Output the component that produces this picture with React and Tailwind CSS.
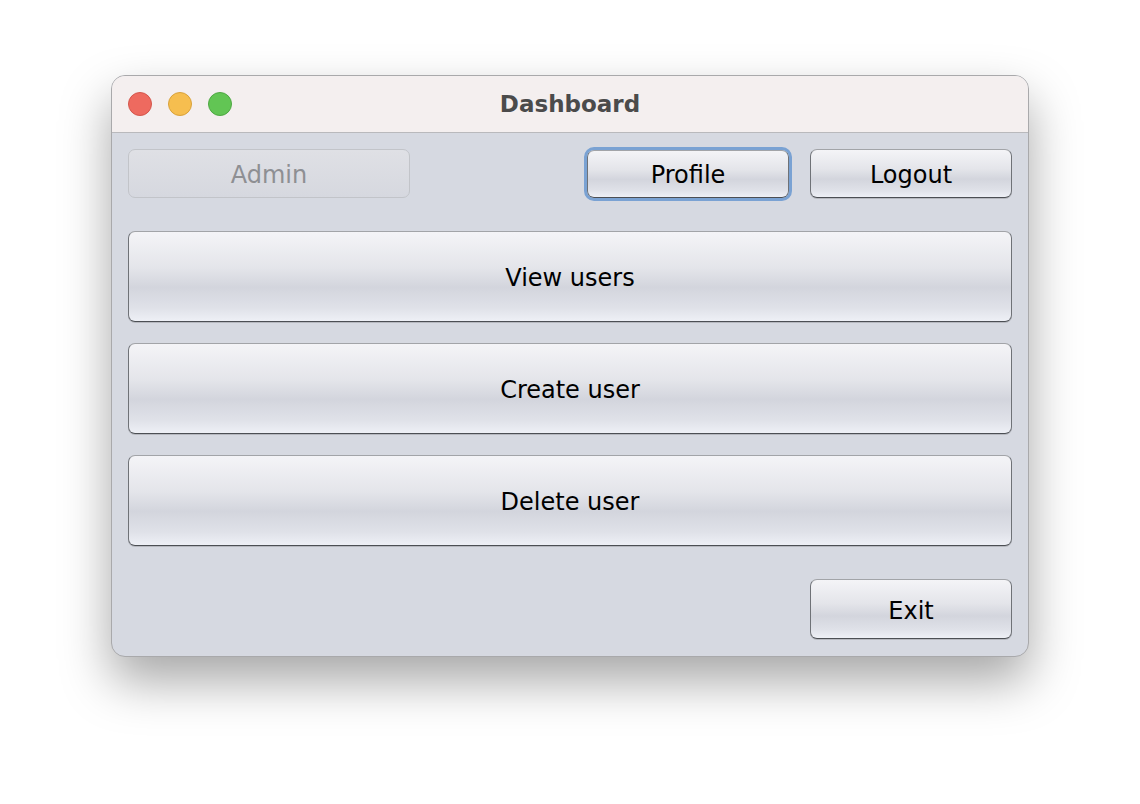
const Btn = ({ children, className = "", focused = false, disabled = false }) => {
    return (
        <button
            className={`flex items-center justify-center pt-[3px] rounded-[7px] border ${disabled ? "text-[#8e8f93] border-[#c2c4c9] bg-[linear-gradient(to_bottom,#dfe0e5,#d6d8df)]" : "text-black border-[#6f7277] border-t-[#a2a4a8] border-b-[#4c4f54] bg-[linear-gradient(to_bottom,#f4f4f7_0%,#e4e5ea_40%,#d3d5dd_62%,#dfe1e8_85%,#eef0f6_100%)] shadow-[0_1px_0_rgba(0,0,0,0.15)]"} text-[24px] ${focused ? "outline-[3px] outline-[#7aa2d3] outline-offset-0" : ""} ${className}`}
        >
            {children}
        </button>
    )
}

export default function App() {
    return (
        <div className="w-[1140px] h-[804px] bg-white flex items-start justify-center font-['DejaVu_Sans',sans-serif]">
            <div className="mt-[75px] w-[918px] h-[582px] rounded-[14px] border border-[#a9a9ab] bg-[#d6d9e1] overflow-hidden shadow-[0_24px_50px_rgba(0,0,0,0.35)] flex flex-col">
                <div className="relative h-[57px] shrink-0 bg-[#f4efef] border-b border-[#b9b9bc] flex items-center justify-center">
                    <div className="absolute left-[16px] top-[16px] flex gap-[16px]">
                        <span className="w-[24px] h-[24px] rounded-full bg-[#ee6a5f] border border-[#d4564c]" />
                        <span className="w-[24px] h-[24px] rounded-full bg-[#f6be4f] border border-[#d9a23b]" />
                        <span className="w-[24px] h-[24px] rounded-full bg-[#62c554] border border-[#4ea843]" />
                    </div>
                    <span className="text-[23px] font-bold text-[#4b4b4b]">Dashboard</span>
                </div>
                <div className="flex flex-col px-[16px] pt-[16px]">
                    <div className="flex items-center h-[49px]">
                        <Btn disabled className="w-[282px] h-[49px]">Admin</Btn>
                        <div className="flex-1" />
                        <Btn focused className="w-[202px] h-[48px] mr-[21px]">Profile</Btn>
                        <Btn className="w-[202px] h-[49px]">Logout</Btn>
                    </div>
                    <div className="flex flex-col gap-[21px] mt-[33px]">
                        <Btn className="w-full h-[91px]">View users</Btn>
                        <Btn className="w-full h-[91px]">Create user</Btn>
                        <Btn className="w-full h-[91px]">Delete user</Btn>
                    </div>
                    <div className="flex justify-end mt-[33px]">
                        <Btn className="w-[202px] h-[60px]">Exit</Btn>
                    </div>
                </div>
            </div>
        </div>
    )
}
